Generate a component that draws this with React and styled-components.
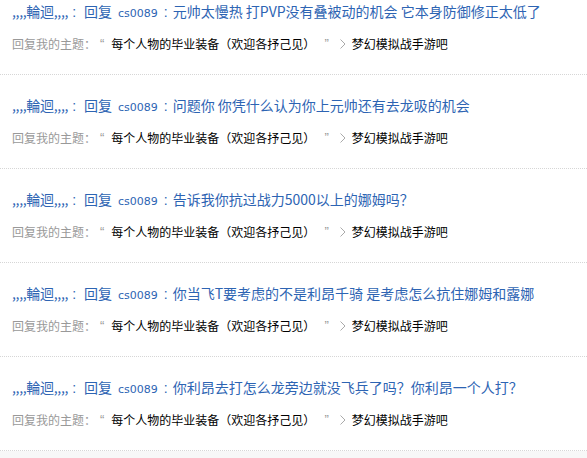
import React from "react";
import styled, { createGlobalStyle } from "styled-components";

const Global = createGlobalStyle`
  html, body { margin: 0; padding: 0; background: #fff; }
  body { font-family: "Noto Sans CJK SC", "Liberation Sans", sans-serif; overflow: hidden; }
`;

const Page = styled.div`
  width: 587px;
  height: 458px;
  overflow: hidden;
  display: flex;
  flex-direction: column;
`;

const List = styled.ul`
  list-style: none;
  margin: -19px 0 0;
  padding: 0;
`;

const Item = styled.li`
  padding: 20px 12px 20px 12px;
  border-bottom: 1px dotted #d6d6d6;
`;

const Title = styled.div`
  font-size: 14px;
  line-height: 20px;
  height: 20px;
  color: #2d64b3;
  white-space: nowrap;
  display: flex;
  align-items: baseline;
`;

const User = styled.span`
  letter-spacing: -0.3px;
`;

const Colon = styled.span`
  font-family: "Liberation Sans", sans-serif;
  margin: ${(p) => (p.$after ? "0 5px 0 6px" : "0 8px 0 4px")};
`;

const Mono = styled.span`
  font-family: "DejaVu Sans", sans-serif;
  font-size: 11px;
  margin-left: 6px;
`;

const Subject = styled.div`
  margin-top: 13px;
  font-size: 12px;
  line-height: 20px;
  height: 20px;
  color: #000;
  white-space: nowrap;
  display: flex;
  align-items: center;
`;

const Label = styled.span`
  color: #999;
`;

const Quote = styled.span`
  font-family: "Liberation Sans", sans-serif;
  font-size: 13px;
  color: #999;
  margin: ${(p) => (p.$open ? "0 7px 0 4px" : "0 11px 0 9px")};
`;

const Chevron = styled.svg`
  width: 6px;
  height: 10px;
  margin-right: 6px;
`;

const Footer = styled.div`
  flex: 1;
  background: #f7f7f7;
`;

const posts = [
  "元帅太慢热 打PVP没有叠被动的机会 它本身防御修正太低了",
  "问题你 你凭什么认为你上元帅还有去龙吸的机会",
  "告诉我你抗过战力5000以上的娜姆吗？",
  "你当飞T要考虑的不是利昂千骑 是考虑怎么抗住娜姆和露娜",
  "你利昂去打怎么龙旁边就没飞兵了吗？你利昂一个人打？",
];

export default function App() {
  return (
    <Page>
      <Global />
      <List>
        {posts.map((p, i) => (
          <Item key={i}>
            <Title>
              <User>,,,,輪迴,,,,</User>
              <Colon>:</Colon>
              <span>回复</span>
              <Mono>cs0089</Mono>
              <Colon $after>:</Colon>
              <span>{p}</span>
            </Title>
            <Subject>
              <Label>回复我的主题：</Label>
              <Quote $open>“</Quote>
              <span>每个人物的毕业装备（欢迎各抒己见）</span>
              <Quote>”</Quote>
              <Chevron viewBox="0 0 6 10">
                <path d="M0.5 0.5 L5 5 L0.5 9.5" fill="none" stroke="#aaa" strokeWidth="1" />
              </Chevron>
              <span>梦幻模拟战手游吧</span>
            </Subject>
          </Item>
        ))}
      </List>
      <Footer />
    </Page>
  );
}
